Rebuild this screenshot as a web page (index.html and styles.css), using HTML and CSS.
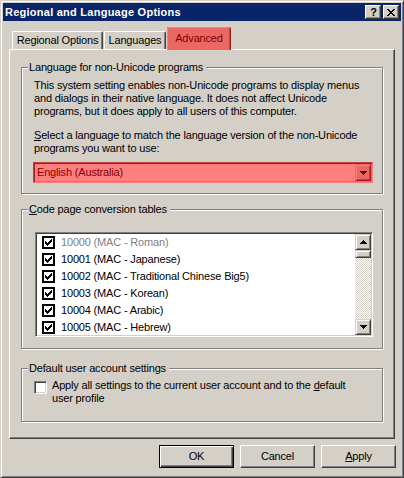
FILE: index.html
```html
<!DOCTYPE html>
<html>
<head>
<meta charset="utf-8">
<link rel="stylesheet" href="styles.css">
</head>
<body>
<div class="window">
  <div class="titlebar">
    <span class="title">Regional and Language Options</span>
    <div class="caption-btns">
      <span class="cbtn help">?</span>
      <span class="cbtn close"><svg width="8" height="7" viewBox="0 0 8 7" shape-rendering="crispEdges"><path d="M0 0h2v1h-2zM6 0h2v1h-2zM1 1h2v1h-2zM5 1h2v1h-2zM2 2h4v1h-4zM3 3h2v1h-2zM2 4h4v1h-4zM1 5h2v1h-2zM5 5h2v1h-2zM0 6h2v1h-2zM6 6h2v1h-2z" fill="#000"/></svg></span>
    </div>
  </div>
  <div class="client">
    <div class="tabs">
      <div class="tab t1">Regional Options</div>
      <div class="tab t2">Languages</div>
      <div class="tab sel hl">Advanced</div>
    </div>
    <div class="panel">
      <div class="group g1">
        <div class="legend">Language for non-Unicode programs</div>
        <p class="desc">This system setting enables non-Unicode programs to display menus<br>and dialogs in their native language. It does not affect Unicode<br>programs, but it does apply to all users of this computer.</p>
        <p class="desc desc2"><u>S</u>elect a language to match the language version of the non-Unicode<br>programs you want to use:</p>
        <div class="combo hl">
          <span class="combo-text">English (Australia)</span>
          <span class="sbtn drop"><svg width="7" height="4" viewBox="0 0 7 4" shape-rendering="crispEdges"><path d="M0 0h7v1h-7zM1 1h5v1h-5zM2 2h3v1h-3zM3 3h1v1h-1z" fill="#000"/></svg></span>
        </div>
      </div>
      <div class="group g2">
        <div class="legend"><u>C</u>ode page conversion tables</div>
        <div class="listbox">
          <div class="items">
            <div class="row disabled"><span class="lcheck"><svg width="7" height="7" viewBox="0 0 7 7" shape-rendering="crispEdges"><path d="M6 0h1v1h-1zM5 1h2v1h-2zM0 2h1v1h-1zM4 2h3v1h-3zM0 3h2v1h-2zM3 3h3v1h-3zM0 4h5v1h-5zM1 5h3v1h-3zM2 6h1v1h-1z" fill="#000"/></svg></span><span>10000 (MAC - Roman)</span></div>
            <div class="row"><span class="lcheck"><svg width="7" height="7" viewBox="0 0 7 7" shape-rendering="crispEdges"><path d="M6 0h1v1h-1zM5 1h2v1h-2zM0 2h1v1h-1zM4 2h3v1h-3zM0 3h2v1h-2zM3 3h3v1h-3zM0 4h5v1h-5zM1 5h3v1h-3zM2 6h1v1h-1z" fill="#000"/></svg></span><span>10001 (MAC - Japanese)</span></div>
            <div class="row"><span class="lcheck"><svg width="7" height="7" viewBox="0 0 7 7" shape-rendering="crispEdges"><path d="M6 0h1v1h-1zM5 1h2v1h-2zM0 2h1v1h-1zM4 2h3v1h-3zM0 3h2v1h-2zM3 3h3v1h-3zM0 4h5v1h-5zM1 5h3v1h-3zM2 6h1v1h-1z" fill="#000"/></svg></span><span>10002 (MAC - Traditional Chinese Big5)</span></div>
            <div class="row"><span class="lcheck"><svg width="7" height="7" viewBox="0 0 7 7" shape-rendering="crispEdges"><path d="M6 0h1v1h-1zM5 1h2v1h-2zM0 2h1v1h-1zM4 2h3v1h-3zM0 3h2v1h-2zM3 3h3v1h-3zM0 4h5v1h-5zM1 5h3v1h-3zM2 6h1v1h-1z" fill="#000"/></svg></span><span>10003 (MAC - Korean)</span></div>
            <div class="row"><span class="lcheck"><svg width="7" height="7" viewBox="0 0 7 7" shape-rendering="crispEdges"><path d="M6 0h1v1h-1zM5 1h2v1h-2zM0 2h1v1h-1zM4 2h3v1h-3zM0 3h2v1h-2zM3 3h3v1h-3zM0 4h5v1h-5zM1 5h3v1h-3zM2 6h1v1h-1z" fill="#000"/></svg></span><span>10004 (MAC - Arabic)</span></div>
            <div class="row"><span class="lcheck"><svg width="7" height="7" viewBox="0 0 7 7" shape-rendering="crispEdges"><path d="M6 0h1v1h-1zM5 1h2v1h-2zM0 2h1v1h-1zM4 2h3v1h-3zM0 3h2v1h-2zM3 3h3v1h-3zM0 4h5v1h-5zM1 5h3v1h-3zM2 6h1v1h-1z" fill="#000"/></svg></span><span>10005 (MAC - Hebrew)</span></div>
          </div>
          <div class="vscroll">
            <span class="sbtn"><svg width="7" height="4" viewBox="0 0 7 4" shape-rendering="crispEdges"><path d="M3 0h1v1h-1zM2 1h3v1h-3zM1 2h5v1h-5zM0 3h7v1h-7z" fill="#000"/></svg></span>
            <span class="sbtn thumb"></span>
            <span class="track"></span>
            <span class="sbtn"><svg width="7" height="4" viewBox="0 0 7 4" shape-rendering="crispEdges"><path d="M0 0h7v1h-7zM1 1h5v1h-5zM2 2h3v1h-3zM3 3h1v1h-1z" fill="#000"/></svg></span>
          </div>
        </div>
      </div>
      <div class="group g3">
        <div class="legend">Default user account settings</div>
        <div class="checkrow">
          <span class="cb3d"></span>
          <span class="cblabel">Apply all settings to the current user account and to the <u>d</u>efault<br>user profile</span>
        </div>
      </div>
    </div>
    <div class="buttons">
      <span class="btn default">OK</span>
      <span class="btn">Cancel</span>
      <span class="btn"><u>A</u>pply</span>
    </div>
  </div>
</div>
</body>
</html>
```

FILE: styles.css
```css
html, body {
  margin: 0;
  padding: 0;
  background: #d4d0c8;
}
body {
  font-family: "Liberation Sans", Arial, sans-serif;
  font-size: 11px;
  letter-spacing: -0.17px;
  color: #000;
  line-height: 13px;
}
.window {
  width: 404px;
  height: 478px;
  box-sizing: border-box;
  border: 1px solid;
  border-color: #d4d0c8 #404040 #404040 #d4d0c8;
  box-shadow: inset 1px 1px #fff, inset -1px -1px #808080;
  padding: 2px;
  background: #d4d0c8;
}
.titlebar {
  height: 18px;
  display: flex;
  align-items: center;
  padding-left: 2px;
  background: #0a246a;
  color: #fff;
}
.title {
  font-weight: bold;
  letter-spacing: 0.25px;
  line-height: 18px;
}
.caption-btns {
  margin-left: auto;
  display: flex;
  gap: 2px;
  padding-right: 2px;
}
.cbtn {
  width: 16px;
  height: 14px;
  box-sizing: border-box;
  background: #d4d0c8;
  border: 1px solid;
  border-color: #fff #404040 #404040 #fff;
  box-shadow: inset -1px -1px #808080;
  display: flex;
  align-items: center;
  justify-content: center;
  color: #000;
}
.help {
  font-weight: bold;
  font-size: 11px;
  line-height: 12px;
  padding-left: 1px;
}
.client {
  padding: 0 6px;
}
.tabs {
  margin-top: 6px;
  height: 22px;
  display: flex;
  align-items: flex-end;
  padding-left: 3px;
  position: relative;
  z-index: 1;
}
.tab {
  height: 18px;
  box-sizing: border-box;
  border-top: 1px solid #fff;
  border-left: 1px solid #fff;
  border-right: 1px solid #404040;
  box-shadow: inset -1px 0 #808080;
  border-radius: 2px 2px 0 0;
  padding-top: 2px;
  text-align: center;
  background: #d4d0c8;
  margin-right: 1px;
}
.t1 { width: 91px; }
.t2 { width: 62px; }
.tab.sel {
  width: 64px;
  height: 23px;
  margin-bottom: -1px;
  padding-top: 4px;
}
.hl {
  position: relative;
}
.hl::after {
  content: "";
  position: absolute;
  inset: -1px;
  background: rgba(255, 0, 0, 0.5);
}
.tab.hl::after {
  inset: -1px -1px 0 -1px;
}
.panel {
  height: 390px;
  box-sizing: border-box;
  border: 1px solid;
  border-color: #fff #404040 #404040 #fff;
  box-shadow: inset -1px -1px #808080;
  overflow: hidden;
}
.group {
  margin: 0 11px;
  border: 1px solid #808080;
  box-shadow: inset 1px 1px #fff, 1px 1px #fff;
}
.g1 {
  margin-top: 17px;
  padding-bottom: 10px;
}
.g2 {
  margin-top: 15px;
  padding-bottom: 11px;
}
.g3 {
  margin-top: 19px;
  padding-bottom: 16px;
}
.legend {
  margin: -7px 0 0 6px;
  padding: 0 3px 0 1px;
  background: #d4d0c8;
  width: fit-content;
  line-height: 13px;
}
.desc {
  margin: 5px 0 0 12px;
}
.desc2 {
  margin-top: 11px;
}
.combo {
  margin: 7px 0 0 11px;
  width: 340px;
  height: 21px;
  box-sizing: border-box;
  border: 1px solid;
  border-color: #808080 #fff #fff #808080;
  box-shadow: inset 1px 1px #404040, inset -1px -1px #d4d0c8;
  background: #fff;
  padding: 1px;
  display: flex;
}
.combo-text {
  flex: 1;
  padding-left: 2px;
  line-height: 17px;
}
.sbtn {
  width: 16px;
  height: 16px;
  box-sizing: border-box;
  background: #d4d0c8;
  border: 1px solid;
  border-color: #d4d0c8 #404040 #404040 #d4d0c8;
  box-shadow: inset 1px 1px #fff, inset -1px -1px #808080;
  display: flex;
  align-items: center;
  justify-content: center;
  flex: none;
}
.drop {
  height: 17px;
}
.listbox {
  margin: 16px 0 0 13px;
  width: 338px;
  height: 105px;
  box-sizing: border-box;
  border: 1px solid;
  border-color: #808080 #fff #fff #808080;
  box-shadow: inset 1px 1px #404040, inset -1px -1px #d4d0c8;
  background: #fff;
  padding: 1px;
  display: flex;
}
.items {
  flex: 1;
  overflow: hidden;
}
.row {
  height: 17px;
  display: flex;
  align-items: center;
  padding-left: 5px;
}
.row.disabled {
  color: #808080;
}
.lcheck {
  width: 13px;
  height: 13px;
  box-sizing: border-box;
  border: 2px solid #000;
  background: #fff;
  display: flex;
  align-items: center;
  justify-content: center;
  margin-right: 6px;
  flex: none;
}
.vscroll {
  width: 16px;
  display: flex;
  flex-direction: column;
}
.thumb {
  height: 8px;
}
.track {
  flex: 1;
  background-color: #fff;
  background-image: conic-gradient(#d4d0c8 25%, #fff 0 50%, #d4d0c8 0 75%, #fff 0);
  background-size: 2px 2px;
}
.checkrow {
  display: flex;
  align-items: flex-start;
  margin: 4px 0 0 12px;
}
.cb3d {
  width: 13px;
  height: 13px;
  box-sizing: border-box;
  flex: none;
  margin: 2px 5px 0 0;
  border: 1px solid;
  border-color: #808080 #fff #fff #808080;
  box-shadow: inset 1px 1px #404040, inset -1px -1px #d4d0c8;
  background: #fff;
}
.buttons {
  margin-top: 6px;
  display: flex;
  justify-content: flex-end;
  gap: 6px;
  margin-right: -1px;
}
.btn {
  width: 75px;
  height: 23px;
  box-sizing: border-box;
  background: #d4d0c8;
  border: 1px solid;
  border-color: #fff #404040 #404040 #fff;
  box-shadow: inset -1px -1px #808080;
  display: flex;
  align-items: center;
  justify-content: center;
  line-height: 13px;
}
.btn.default {
  border-color: #000;
  box-shadow: inset 1px 1px #fff, inset -1px -1px #404040, inset -2px -2px #808080;
}
```
